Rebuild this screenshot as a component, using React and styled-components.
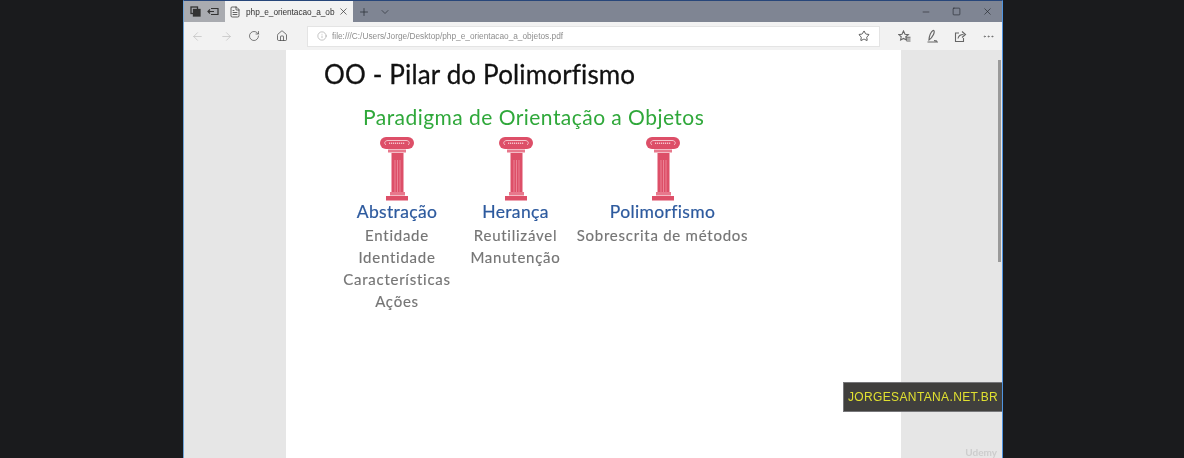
import React from 'react'
import styled, { createGlobalStyle } from 'styled-components'
import {
  ArrowLeft, ArrowRight, RotateCw, Home, Info, Star, X, Plus, ChevronDown, Minus, Square, MoreHorizontal, FileText,
} from 'lucide-react'

const Global = createGlobalStyle`
  html, body { margin: 0; padding: 0; background: #1a1b1d; overflow: hidden; }
  body { font-family: "Lato", "Liberation Sans", sans-serif; }
  svg { flex: none; }
`

const Stage = styled.div`
  width: 1184px;
  height: 458px;
  display: flex;
  justify-content: flex-start;
  padding-left: 183px;
  box-sizing: border-box;
  overflow: hidden;
  background: #1a1b1d;
`

const Browser = styled.div`
  position: relative;
  width: 820px;
  height: 458px;
  display: flex;
  flex-direction: column;
  box-sizing: border-box;
  border-left: 1px solid #6ea3d8;
  border-right: 1px solid #4f94e0;
  border-top: 1px solid #27467a;
  filter: blur(0.45px);
`

const TitleBar = styled.div`
  height: 21px;
  display: flex;
  align-items: stretch;
  background: #7f8593;
  color: #333;
`

const TabButtons = styled.div`
  width: 41px;
  display: flex;
  align-items: center;
  justify-content: space-around;
  padding: 0 3px;
  box-sizing: border-box;
  background: #a9abb0;
`

const Tab = styled.div`
  width: 128px;
  display: flex;
  align-items: center;
  padding-left: 4px;
  box-sizing: border-box;
  background: #f2f2f2;
  color: #333;
`

const TabTitle = styled.span`
  width: 87px;
  margin-left: 5px;
  white-space: nowrap;
  font-family: "Liberation Sans", sans-serif;
  font-size: 8.3px;
  letter-spacing: -0.05px;
`

const TabActions = styled.div`
  display: flex;
  align-items: center;
  gap: 9px;
  padding-left: 5px;
  color: #2e323a;
`

const WindowControls = styled.div`
  margin-left: auto;
  display: flex;
  align-items: center;
  gap: 21px;
  padding-right: 9px;
  color: #22252b;
`

const Toolbar = styled.div`
  height: 28px;
  display: flex;
  align-items: center;
  background: #f2f2f2;
  color: #555;
`

const NavIcons = styled.div`
  width: 123px;
  flex: none;
  display: flex;
  align-items: center;
  gap: 15.5px;
  padding-left: 7px;
  box-sizing: border-box;
`

const NavIcon = styled.span`
  display: flex;
  color: ${({ $muted }) => ($muted ? '#c2c2c2' : '#4a4a4a')};
`

const AddressBar = styled.div`
  width: 573px;
  flex: none;
  height: 21px;
  display: flex;
  align-items: center;
  gap: 5px;
  padding: 0 9px;
  box-sizing: border-box;
  background: #fff;
  border: 1px solid #e4e4e4;
  color: #8a8a8a;
`

const Url = styled.span`
  flex: 1;
  font-family: "Liberation Sans", sans-serif;
  font-size: 8.3px;
  color: #8e8e8e;
  white-space: nowrap;
`

const ToolActions = styled.div`
  flex: 1;
  display: flex;
  align-items: center;
  gap: 15px;
  padding-left: 18px;
  color: #666;
`

const Viewport = styled.div`
  flex: 1;
  display: flex;
  background: #e6e6e6;
  overflow: hidden;
`

const Gutter = styled.div`
  flex: 1;
  display: flex;
  justify-content: flex-end;
`

const Scrollbar = styled.div`
  width: 3px;
  height: 202px;
  margin: 10px 1px 0 0;
  background: #9a9a9a;
`

const Sheet = styled.div`
  width: 615px;
  flex: none;
  margin-left: 102px;
  padding: 8px 0 0 38px;
  box-sizing: border-box;
  background: #fff;
`

const Heading = styled.h1`
  margin: 0;
  height: 32px;
  font-size: 26px;
  line-height: 32px;
  font-weight: 400;
  color: #111;
  -webkit-text-stroke: 0.3px #111;
  letter-spacing: 0.15px;
  white-space: nowrap;
`

const Paradigm = styled.h2`
  margin: 14px 0 0 39px;
  height: 26px;
  font-size: 21px;
  line-height: 26px;
  font-weight: 400;
  color: #2fa83a;
  letter-spacing: 0.46px;
  white-space: nowrap;
`

const Pillars = styled.div`
  display: flex;
  align-items: flex-start;
  margin: 7px 0 0 18px;
`

const Pillar = styled.div`
  width: ${({ $w }) => $w}px;
  margin-right: ${({ $gap }) => $gap}px;
  display: flex;
  flex-direction: column;
  align-items: center;
`

const PillarName = styled.div`
  margin-top: -1px;
  height: 24px;
  font-size: 17.5px;
  line-height: 24px;
  color: #2d5a9e;
  -webkit-text-stroke: 0.2px #2d5a9e;
  letter-spacing: 0.35px;
  white-space: nowrap;
`

const Concept = styled.div`
  height: 22px;
  font-size: 15px;
  line-height: 22px;
  color: #757575;
  -webkit-text-stroke: 0.15px #757575;
  letter-spacing: 0.75px;
  white-space: nowrap;
`

const Watermark = styled.div`
  position: absolute;
  left: 659px;
  top: 381px;
  width: 159px;
  height: 30px;
  display: flex;
  align-items: center;
  justify-content: center;
  box-sizing: border-box;
  background: #403f3d;
  border: 1px solid #77777a;
  border-right: 0;
  font-family: "Liberation Sans", sans-serif;
  font-size: 12px;
  letter-spacing: 0.37px;
  color: #e0e030;
`

const Brand = styled.div`
  position: absolute;
  right: 5px;
  bottom: 0;
  font-size: 10px;
  font-weight: 700;
  line-height: 11px;
  color: #cdcdcd;
`

const PillarIcon = () => (
  <svg width="34" height="64" viewBox="0 0 34 64">
    <rect x="0" y="0" width="34" height="12" rx="6" fill="#dd4f68" />
    <path d="M6 8C3.5 6 5 3.5 8 3.5H26C29 3.5 30.5 6 28 8" fill="none" stroke="#f6c4cd" strokeWidth="1" />
    <path d="M9 6.2H25" stroke="#f6c4cd" strokeWidth="1.6" strokeDasharray="1.2 0.8" />
    <rect x="8" y="12.5" width="18" height="3" fill="#e8788c" />
    <rect x="11.5" y="16" width="12" height="39" fill="#dd4f68" />
    <path d="M15 23V55M17.5 23V55M20 23V55" stroke="#ef8fa1" strokeWidth="0.8" />
    <rect x="10" y="55" width="15" height="3.5" fill="#e8788c" />
    <rect x="6" y="59" width="22" height="4.5" fill="#dd4f68" />
  </svg>
)

const TabsIcon = () => (
  <svg width="11" height="11" viewBox="0 0 11 11" fill="none" stroke="currentColor" strokeWidth="1.3">
    <rect x="1" y="1" width="6.5" height="6.5" />
    <rect x="3.5" y="3.5" width="6.5" height="6.5" fill="currentColor" />
  </svg>
)

const SetAsideIcon = () => (
  <svg width="12" height="11" viewBox="0 0 12 11" fill="none" stroke="currentColor" strokeWidth="1.2">
    <path d="M4 2.5H11V8.5H4" />
    <path d="M7 5.5H1M3 3.5L1 5.5L3 7.5" />
  </svg>
)

const HubIcon = () => (
  <svg width="13" height="13" viewBox="0 0 13 13" fill="none" stroke="currentColor" strokeWidth="1.1">
    <path d="M5.5 1L7 4.3L10.3 4.6L7.8 6.8L8.4 10L5.5 8.4L2.6 10L3.2 6.8L.8 4.6L4 4.3Z" />
    <path d="M8 9H12.5M8.5 11H12.5M8 7.2H12.5" />
  </svg>
)

const InkIcon = () => (
  <svg width="13" height="14" viewBox="0 0 13 14" fill="none" stroke="currentColor" strokeWidth="1.2">
    <path d="M3 11C3 7 5 2.5 7 1.5C8.5 1 8.5 3.5 7.5 5.5C6.5 7.5 5 10 3 11Z" />
    <path d="M1.5 13H12M8 11.5L11 12" />
  </svg>
)

const ShareIcon = () => (
  <svg width="13" height="13" viewBox="0 0 13 13" fill="none" stroke="currentColor" strokeWidth="1.1">
    <path d="M5 3H1.5V11.5H9.5V8" />
    <path d="M4 8.5C4.5 6 6.5 4.5 9.5 4.5M8 1.5L11.5 4.5L8 7.5" />
  </svg>
)

const pillars = [
  { name: 'Abstração', w: 110, gap: 20, items: ['Entidade', 'Identidade', 'Características', 'Ações'] },
  { name: 'Herança', w: 87, gap: 18, items: ['Reutilizável', 'Manutenção'] },
  { name: 'Polimorfismo', w: 171, gap: 0, items: ['Sobrescrita de métodos'] },
]

const App = () => (
  <>
    <Global />
    <Stage>
      <Browser>
        <TitleBar>
          <TabButtons>
            <TabsIcon />
            <SetAsideIcon />
          </TabButtons>
          <Tab>
            <FileText size={12} strokeWidth={1.5} />
            <TabTitle>php_e_orientacao_a_ob</TabTitle>
            <X size={11} style={{ marginLeft: 5 }} strokeWidth={1.5} />
          </Tab>
          <TabActions>
            <Plus size={12} strokeWidth={1.6} />
            <ChevronDown size={12} strokeWidth={1.4} />
          </TabActions>
          <WindowControls>
            <Minus size={10} strokeWidth={1.4} />
            <Square size={9} strokeWidth={1.6} />
            <X size={11} strokeWidth={1.4} />
          </WindowControls>
        </TitleBar>
        <Toolbar>
          <NavIcons>
            <NavIcon $muted><ArrowLeft size={13} strokeWidth={1.4} /></NavIcon>
            <NavIcon $muted><ArrowRight size={13} strokeWidth={1.4} /></NavIcon>
            <NavIcon><RotateCw size={12} strokeWidth={1.4} /></NavIcon>
            <NavIcon><Home size={12} strokeWidth={1.5} /></NavIcon>
          </NavIcons>
          <AddressBar>
            <Info size={10} strokeWidth={1.2} />
            <Url>file:///C:/Users/Jorge/Desktop/php_e_orientacao_a_objetos.pdf</Url>
            <NavIcon><Star size={12} strokeWidth={1.6} color="#333" /></NavIcon>
          </AddressBar>
          <ToolActions>
            <HubIcon />
            <InkIcon />
            <ShareIcon />
            <MoreHorizontal size={13} strokeWidth={1.4} />
          </ToolActions>
        </Toolbar>
        <Viewport>
          <Sheet>
            <Heading>OO - Pilar do Polimorfismo</Heading>
            <Paradigm>Paradigma de Orientação a Objetos</Paradigm>
            <Pillars>
              {pillars.map((p) => (
                <Pillar key={p.name} $w={p.w} $gap={p.gap}>
                  <PillarIcon />
                  <PillarName>{p.name}</PillarName>
                  {p.items.map((item) => (
                    <Concept key={item}>{item}</Concept>
                  ))}
                </Pillar>
              ))}
            </Pillars>
          </Sheet>
          <Gutter>
            <Scrollbar />
          </Gutter>
        </Viewport>
        <Watermark>JORGESANTANA.NET.BR</Watermark>
        <Brand>Udemy</Brand>
      </Browser>
    </Stage>
  </>
)

export default App
